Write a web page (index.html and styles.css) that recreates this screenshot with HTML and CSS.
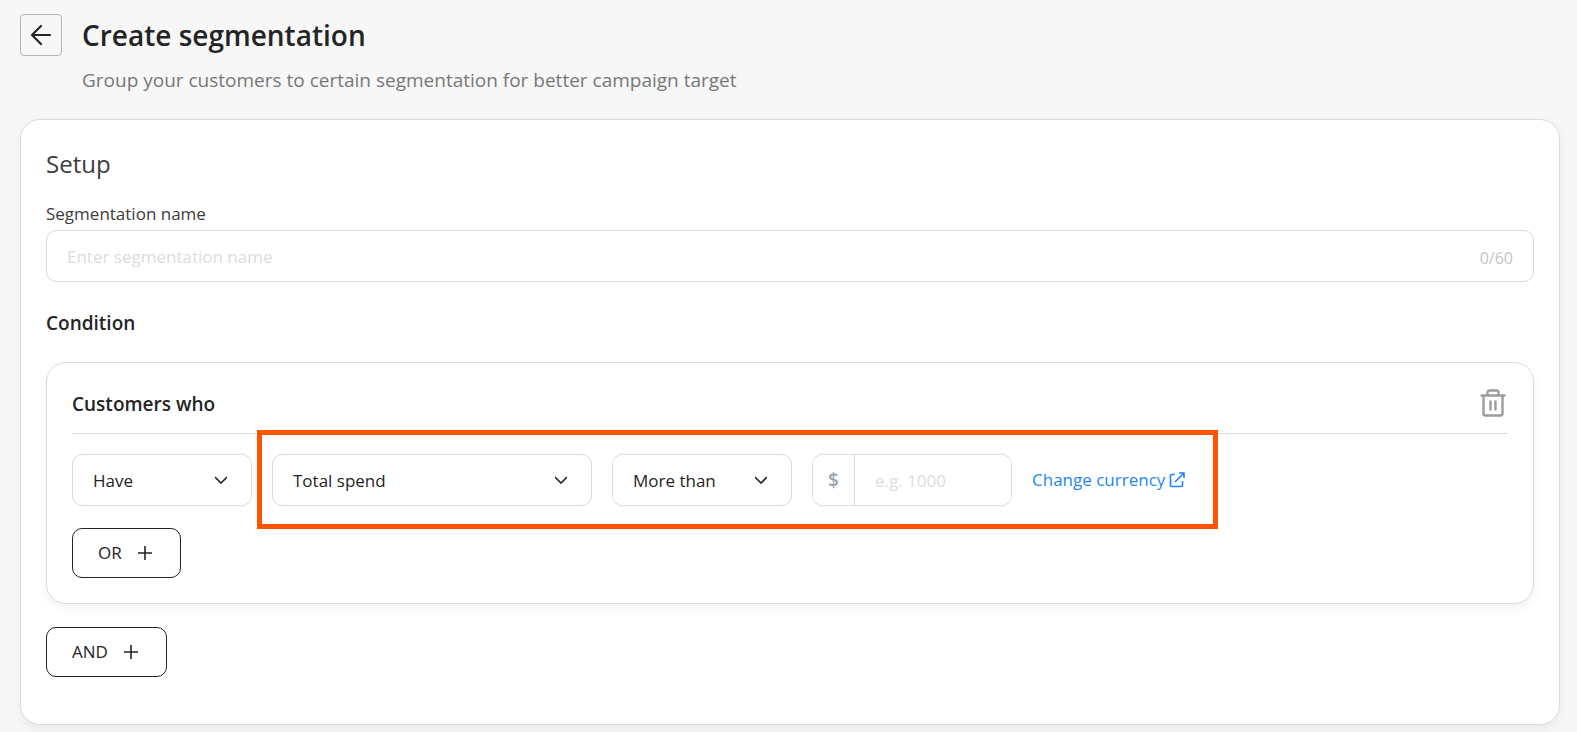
FILE: index.html
```html
<!DOCTYPE html>
<html lang="en">
<head>
    <meta charset="UTF-8">
    <meta name="viewport" content="width=device-width, initial-scale=1.0">
    <title>Create segmentation</title>
    <link rel="stylesheet" href="styles.css">
</head>
<body>
    <header class="page-header">
        <button type="button" class="back-btn" aria-label="Back">
            <svg width="22" height="22" viewBox="0 0 22 22"><path d="M20 11H2M11 2L2 11l9 9"/></svg>
        </button>
        <div class="page-heading">
            <h1>Create segmentation</h1>
            <p>Group your customers to certain segmentation for better campaign target</p>
        </div>
    </header>

    <main class="card setup-card">
        <h2 class="setup-title">Setup</h2>
        <label class="field-label" for="segmentName">Segmentation name</label>
        <div class="field name-field">
            <input type="text" id="segmentName" maxlength="60" placeholder="Enter segmentation name">
            <span class="counter" id="nameCounter">0/60</span>
        </div>

        <h3 class="section-title">Condition</h3>
        <section class="card condition-card">
            <div class="condition-header">
                <h3>Customers who</h3>
                <button type="button" class="delete-btn" aria-label="Delete condition">
                    <svg width="28" height="30" viewBox="1 0 28 30"><path d="M2.500 7.500h23M4.500 7.500v18a2 2 0 0 0 2 2h15a2 2 0 0 0 2-2v-18M8.500 7V4.500a2 2 0 0 1 2-2h7a2 2 0 0 1 2 2V7M11.500 13.500v8M16.500 13.500v8"/></svg>
                </button>
            </div>
            <div class="condition-row">
                <div class="select-box">
                    <select aria-label="Have or have not">
                        <option>Have</option>
                        <option>Have not</option>
                    </select>
                    <svg class="chevron" width="12" height="8" viewBox="0 0 12 8"><path d="M0 1l6 6 6-6"/></svg>
                </div>
                <div class="rule-group">
                    <div class="select-box select-wide">
                        <select aria-label="Customer property">
                            <option>Total spend</option>
                            <option>Total orders</option>
                        </select>
                        <svg class="chevron" width="12" height="8" viewBox="0 0 12 8"><path d="M0 1l6 6 6-6"/></svg>
                    </div>
                    <div class="select-box">
                        <select aria-label="Comparison">
                            <option>More than</option>
                            <option>Less than</option>
                        </select>
                        <svg class="chevron" width="12" height="8" viewBox="0 0 12 8"><path d="M0 1l6 6 6-6"/></svg>
                    </div>
                    <div class="field amount-field">
                        <label class="currency" for="amount">$</label>
                        <input type="text" id="amount" inputmode="decimal" placeholder="e.g. 1000">
                    </div>
                    <a href="#" class="currency-link">Change currency
                        <svg width="16" height="16" viewBox="0 0 16 16"><path d="M6 2.500H2.500a1 1 0 0 0-1 1v10a1 1 0 0 0 1 1h10a1 1 0 0 0 1-1V9M10 1h5v5M15 1L6 10"/></svg>
                    </a>
                    <div class="highlight"></div>
                </div>
            </div>
            <button type="button" class="add-btn">OR
                <svg width="14" height="14" viewBox="0 0 14 14"><path d="M7 0v14M0 7h14"/></svg>
            </button>
        </section>

        <button type="button" class="add-btn">AND
            <svg width="14" height="14" viewBox="0 0 14 14"><path d="M7 0v14M0 7h14"/></svg>
        </button>
    </main>

    <script>
        const segmentName = document.getElementById('segmentName');
        const nameCounter = document.getElementById('nameCounter');

        segmentName.addEventListener('input', () => {
            nameCounter.textContent = segmentName.value.length + '/60';
        });
    </script>
</body>
</html>
```
FILE: styles.css
```css
:root {
    --text-color: #242424;
    --muted-color: #777777;
    --border-color: #dcdcdc;
    --link-color: #1f87f0;
    --highlight-color: #ff5500;
}

* {
    margin: 0;
    padding: 0;
    box-sizing: border-box;
}

body {
    font-family: "Segoe UI", "Open Sans", sans-serif;
    font-size: 17px;
    line-height: 24px;
    background-color: #f7f7f7;
    color: var(--text-color);
    padding: 14px 17px 7px 20px;
}

button, input, select {
    font: inherit;
    color: inherit;
    background: none;
    border: none;
}

button, select, a {
    cursor: pointer;
}

svg {
    display: block;
    fill: none;
    stroke: currentColor;
    stroke-width: 1.6;
}

/* Header */
.page-header {
    display: flex;
    align-items: flex-start;
    gap: 20px;
    margin-bottom: 27px;
}

.back-btn {
    display: flex;
    justify-content: center;
    align-items: center;
    width: 42px;
    height: 42px;
    border: 1px solid #b4b4b4;
    border-radius: 4px;
}

.back-btn svg {
    stroke-width: 2.2;
    stroke-linecap: round;
    stroke-linejoin: round;
}

.page-heading h1 {
    font-size: 28px;
    font-weight: 600;
    line-height: 42px;
}

.page-heading p {
    font-size: 19px;
    line-height: 24px;
    margin-top: 12px;
    color: var(--muted-color);
}

/* Cards */
.card {
    background-color: #fff;
    border: 1px solid var(--border-color);
    border-radius: 20px;
    padding: 25px;
    box-shadow: 0 4px 10px rgba(0, 0, 0, 0.06);
}

.setup-card {
    padding-bottom: 47px;
}

.setup-title {
    font-size: 24px;
    font-weight: 400;
    line-height: 38px;
    color: #3c3c3c;
}

.field-label {
    display: block;
    margin: 19px 0 4px;
    color: #3c3c3c;
}

/* Inputs */
.field {
    display: flex;
    align-items: center;
    height: 52px;
    border: 1px solid var(--border-color);
    border-radius: 10px;
}

.field input {
    flex: 1;
    min-width: 0;
    height: 100%;
    padding: 0 20px;
    outline: none;
}

.field input::placeholder {
    color: #dcdcdc;
}

.counter {
    padding: 4px 20px 0 0;
    font-size: 16px;
    color: #c4c4c4;
}

.section-title {
    font-size: 19px;
    font-weight: 600;
    line-height: 28px;
    margin: 27px 0 25px;
}

/* Condition */
.condition-card {
    margin-bottom: 23px;
}

.condition-header {
    display: flex;
    justify-content: space-between;
    align-items: flex-end;
    padding-bottom: 15px;
    border-bottom: 1px solid var(--border-color);
}

.condition-header h3 {
    font-size: 19px;
    font-weight: 600;
    line-height: 28px;
}

.delete-btn {
    color: #9c9c9c;
}

.delete-btn svg {
    stroke-width: 2.4;
    stroke-linecap: round;
}

.condition-row {
    display: flex;
    gap: 20px;
    margin: 20px 0 22px;
}

.rule-group {
    position: relative;
    display: flex;
    align-items: center;
    gap: 20px;
}

.select-box {
    position: relative;
    width: 180px;
    height: 52px;
}

.select-wide {
    width: 320px;
}

.select-box select {
    appearance: none;
    width: 100%;
    height: 100%;
    padding: 2px 44px 0 20px;
    border: 1px solid var(--border-color);
    border-radius: 10px;
}

.chevron {
    position: absolute;
    top: 22px;
    right: 25px;
    pointer-events: none;
}

.amount-field {
    width: 200px;
}

.currency {
    display: flex;
    justify-content: center;
    align-items: center;
    width: 42px;
    height: 100%;
    border-right: 1px solid var(--border-color);
    font-size: 19px;
    font-weight: 600;
    color: #9ca3af;
}

.currency-link {
    display: flex;
    align-items: center;
    gap: 4px;
    color: var(--link-color);
    text-decoration: none;
}

.highlight {
    position: absolute;
    inset: -24px -33px -23px -15px;
    border: 5px solid var(--highlight-color);
    pointer-events: none;
}

.add-btn {
    display: flex;
    align-items: center;
    gap: 16px;
    height: 50px;
    padding: 0 28px 0 25px;
    border: 1px solid var(--text-color);
    border-radius: 10px;
}
```
